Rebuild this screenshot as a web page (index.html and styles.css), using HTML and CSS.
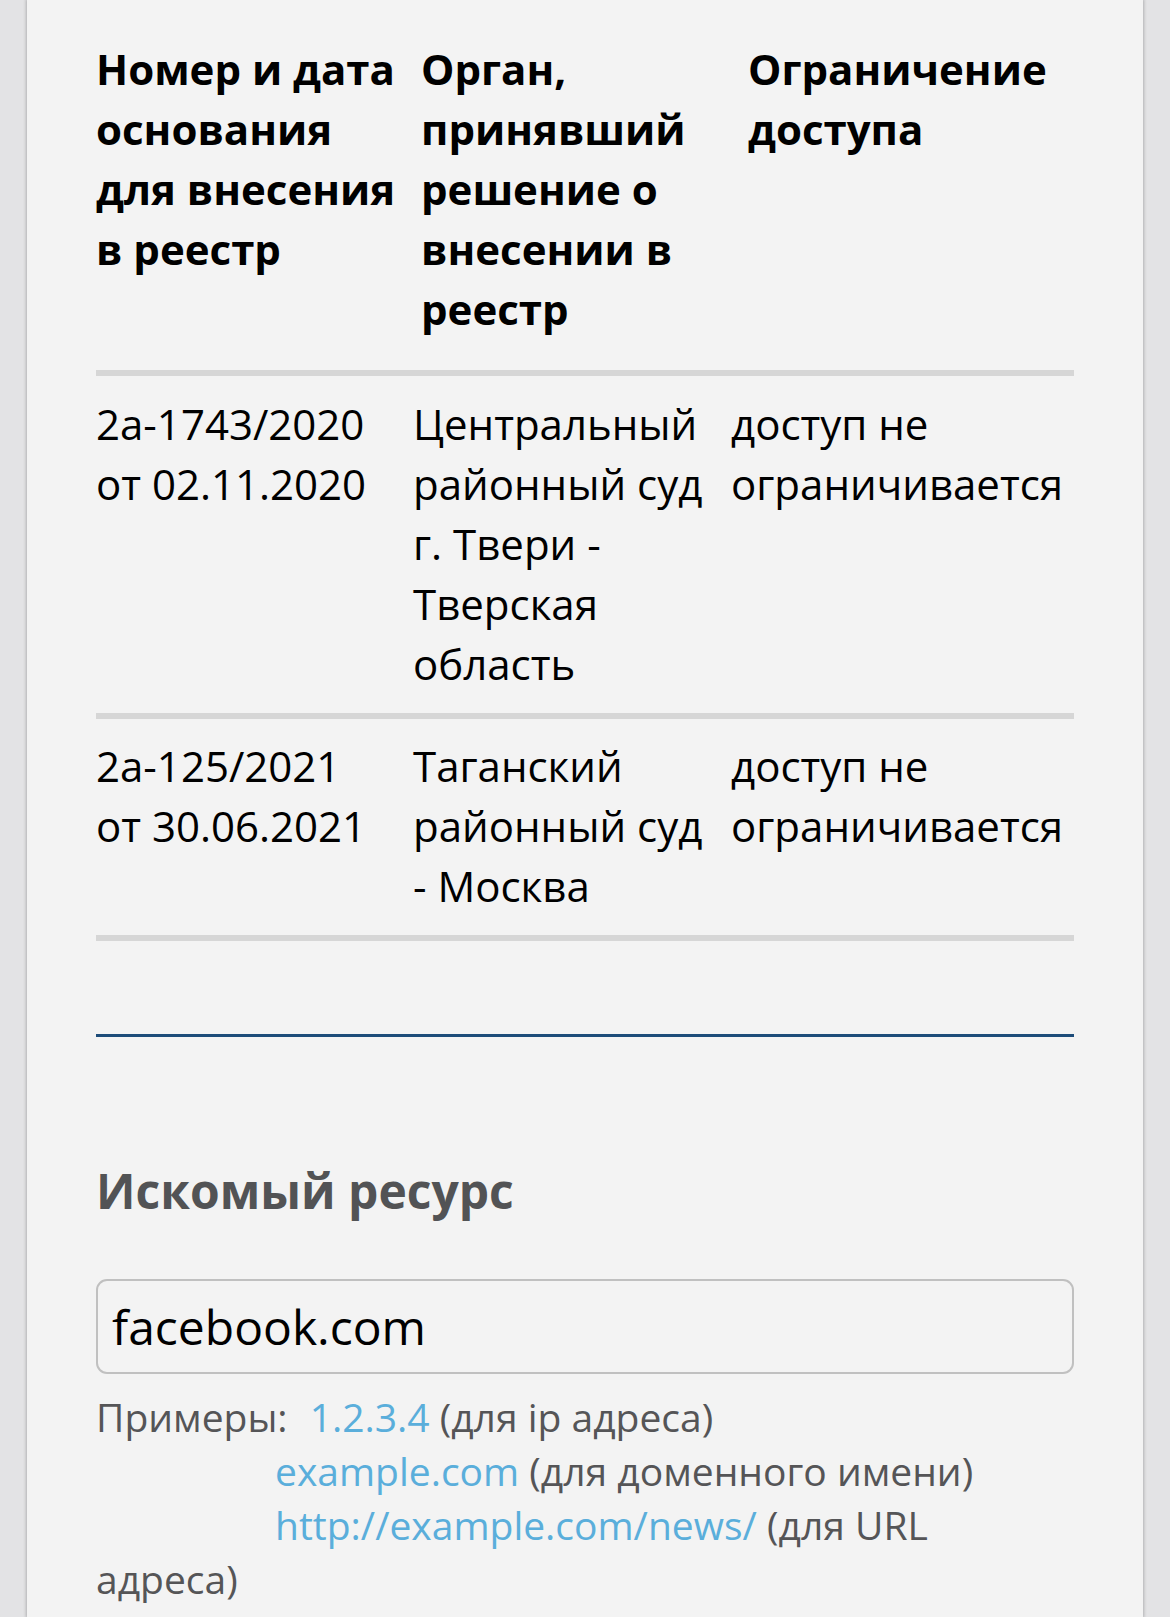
FILE: index.html
```html
<!DOCTYPE html>
<html lang="ru">
<head>
<meta charset="utf-8">
<title>Реестр</title>
<link rel="stylesheet" href="styles.css">
</head>
<body>
<main class="card">
  <div class="table">
    <div class="row head">
      <div class="cell">Номер и дата основания для внесения в реестр</div>
      <div class="cell">Орган, принявший решение о внесении в реестр</div>
      <div class="cell">Ограничение доступа</div>
    </div>
    <div class="row body r1">
      <div class="cell">2а-1743/2020 от 02.11.2020</div>
      <div class="cell">Центральный районный суд г. Твери - Тверская область</div>
      <div class="cell">доступ не ограничивается</div>
    </div>
    <div class="row body r2">
      <div class="cell">2а-125/2021 от 30.06.2021</div>
      <div class="cell">Таганский районный суд - Москва</div>
      <div class="cell">доступ не ограничивается</div>
    </div>
  </div>

  <hr class="divider">

  <h2 class="title">Искомый ресурс</h2>
  <div class="input">facebook.com</div>
  <p class="examples"><span class="label">Примеры:</span><a href="#">1.2.3.4</a> (для ip адреса)<br><span class="indent"></span><a href="#">example.com</a> (для доменного имени)<br><span class="indent"></span><a href="#">http://example.com/news/</a> (для URL адреса)</p>
</main>
</body>
</html>
```

FILE: styles.css
```css
html, body {
  margin: 0;
  padding: 0;
}
body {
  background: #e3e3e5;
  font-family: "Open Sans", "Liberation Sans", sans-serif;
  color: #000;
  height: 1617px;
  overflow: hidden;
}
.card {
  margin-left: 27px;
  width: 1116px;
  min-height: 1617px;
  box-sizing: border-box;
  background: #f3f3f3;
  box-shadow: 0 0 3px 1px rgba(0, 0, 0, 0.22);
  padding: 0 69px;
}
.table {
  display: flex;
  flex-direction: column;
}
.row {
  display: grid;
  border-bottom: 6px solid #d6d6d6;
  font-size: 42px;
  line-height: 60px;
}
.cell {
  padding-right: 24px;
}
.head {
  grid-template-columns: 325px 327px 1fr;
  font-weight: 700;
  padding: 39px 0 31px;
}
.body {
  grid-template-columns: 317px 318px 1fr;
  padding: 18px 0 19px;
}
.r2 {
  padding-top: 17px;
}
.divider {
  margin: 93px 0 0;
  border: 0;
  height: 3px;
  background: #1d4c79;
}
.title {
  margin: 122px 0 0;
  font-size: 48px;
  line-height: 64px;
  font-weight: 700;
  color: #525355;
}
.input {
  margin-top: 56px;
  height: 95px;
  box-sizing: border-box;
  border: 2px solid #c0c0c0;
  border-radius: 11px;
  display: flex;
  align-items: center;
  padding-left: 14px;
  font-size: 48px;
  color: #000;
}
.examples {
  margin: 16px 0 0;
  padding-right: 6px;
  font-size: 39px;
  line-height: 54px;
  color: #555557;
}
.label {
  margin-right: 22px;
}
.indent {
  display: inline-block;
  width: 179px;
}
.examples a {
  color: #5aaedb;
  text-decoration: none;
}
```
